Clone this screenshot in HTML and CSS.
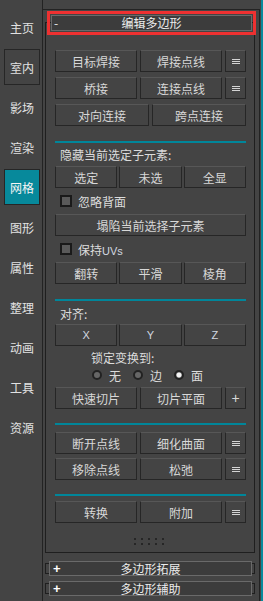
FILE: index.html
```html
<!DOCTYPE html>
<html lang="zh">
<head>
    <meta charset="UTF-8">
    <meta name="viewport" content="width=device-width, initial-scale=1.0">
    <title>编辑多边形</title>
    <link rel="stylesheet" href="styles.css">
</head>
<body>
    <div class="sidebar">
        <div class="nav-item">主页</div>
        <div class="nav-item hover">室内</div>
        <div class="nav-item">影场</div>
        <div class="nav-item">渲染</div>
        <div class="nav-item active">网格</div>
        <div class="nav-item">图形</div>
        <div class="nav-item">属性</div>
        <div class="nav-item">整理</div>
        <div class="nav-item">动画</div>
        <div class="nav-item">工具</div>
        <div class="nav-item">资源</div>
    </div>

    <div class="panel">
        <div class="rollout">
            <div class="rollout-head marked"><span class="toggle">-</span><span>编辑多边形</span><span></span></div>
            <div class="rollout-body">
                <div class="group first">
                    <div class="row with-icon">
                        <button class="btn">目标焊接</button>
                        <button class="btn">焊接点线</button>
                        <button class="btn"><svg width="8" height="5" viewBox="0 0 8 5"><rect y="0" width="8" height="1" fill="#d4d4d4"/><rect y="2" width="8" height="1" fill="#d4d4d4"/><rect y="4" width="8" height="1" fill="#d4d4d4"/></svg></button>
                    </div>
                    <div class="row with-icon">
                        <button class="btn">桥接</button>
                        <button class="btn">连接点线</button>
                        <button class="btn"><svg width="8" height="5" viewBox="0 0 8 5"><rect y="0" width="8" height="1" fill="#d4d4d4"/><rect y="2" width="8" height="1" fill="#d4d4d4"/><rect y="4" width="8" height="1" fill="#d4d4d4"/></svg></button>
                    </div>
                    <div class="row">
                        <button class="btn">对向连接</button>
                        <button class="btn">跨点连接</button>
                    </div>
                </div>

                <div class="group hide-group">
                    <div class="label">隐藏当前选定子元素:</div>
                    <div class="row three">
                        <button class="btn">选定</button>
                        <button class="btn">未选</button>
                        <button class="btn">全显</button>
                    </div>
                    <div class="check-row"><span class="check"></span><span>忽略背面</span></div>
                    <button class="btn">塌陷当前选择子元素</button>
                    <div class="check-row"><span class="check"></span><span>保持<span class="latin">UVs</span></span></div>
                    <div class="row three">
                        <button class="btn">翻转</button>
                        <button class="btn">平滑</button>
                        <button class="btn">棱角</button>
                    </div>
                </div>

                <div class="group align-group">
                    <div class="label tall">对齐:</div>
                    <div class="row three">
                        <button class="btn latin">X</button>
                        <button class="btn latin">Y</button>
                        <button class="btn latin">Z</button>
                    </div>
                    <div class="label lock">锁定变换到:</div>
                    <div class="radio-row">
                        <span class="radio-opt"><span class="radio"></span>无</span>
                        <span class="radio-opt"><span class="radio"></span>边</span>
                        <span class="radio-opt"><span class="radio on"></span>面</span>
                    </div>
                    <div class="row with-icon">
                        <button class="btn">快速切片</button>
                        <button class="btn">切片平面</button>
                        <button class="btn plus">+</button>
                    </div>
                </div>

                <div class="group edit-group">
                    <div class="row with-icon">
                        <button class="btn">断开点线</button>
                        <button class="btn">细化曲面</button>
                        <button class="btn"><svg width="8" height="5" viewBox="0 0 8 5"><rect y="0" width="8" height="1" fill="#d4d4d4"/><rect y="2" width="8" height="1" fill="#d4d4d4"/><rect y="4" width="8" height="1" fill="#d4d4d4"/></svg></button>
                    </div>
                    <div class="row with-icon">
                        <button class="btn">移除点线</button>
                        <button class="btn">松弛</button>
                        <button class="btn"><svg width="8" height="5" viewBox="0 0 8 5"><rect y="0" width="8" height="1" fill="#d4d4d4"/><rect y="2" width="8" height="1" fill="#d4d4d4"/><rect y="4" width="8" height="1" fill="#d4d4d4"/></svg></button>
                    </div>
                </div>

                <div class="group last">
                    <div class="row with-icon">
                        <button class="btn">转换</button>
                        <button class="btn">附加</button>
                        <button class="btn"><svg width="8" height="5" viewBox="0 0 8 5"><rect y="0" width="8" height="1" fill="#d4d4d4"/><rect y="2" width="8" height="1" fill="#d4d4d4"/><rect y="4" width="8" height="1" fill="#d4d4d4"/></svg></button>
                    </div>
                    <div class="grip"></div>
                </div>
            </div>
        </div>

        <div class="rollout closed">
            <div class="rollout-head"><span class="toggle">+</span><span>多边形拓展</span><span></span></div>
        </div>
        <div class="rollout closed second">
            <div class="rollout-head"><span class="toggle">+</span><span>多边形辅助</span><span></span></div>
        </div>
    </div>

    <div class="scrollbar"></div>
</body>
</html>
```

FILE: styles.css
```css
* {
    box-sizing: border-box;
}
html, body {
    margin: 0;
}
body {
    display: flex;
    height: 601px;
    overflow: hidden;
    background-color: #444444;
    color: #dcdcdc;
    font-family: "Noto Sans CJK SC", "Liberation Sans", sans-serif;
    font-size: 12px;
}

/* left tab bar */
.sidebar {
    width: 43px;
    flex-shrink: 0;
    border-right: 1px solid #232323;
    display: flex;
    flex-direction: column;
    gap: 4px;
    padding: 9px 0 0 4px;
}
.nav-item {
    width: 36px;
    height: 36px;
    display: flex;
    align-items: center;
    justify-content: center;
    border: 1px solid transparent;
    color: #e2e2e2;
}
.nav-item.hover {
    border-color: #262626;
}
.nav-item.active {
    background-color: #07899b;
    border-color: #262626;
    color: #f4f4f4;
}

/* command panel */
.panel {
    width: 217px;
    flex-shrink: 0;
    margin-top: 9px;
    border-top: 1px solid #232323;
    border-right: 1px solid #232323;
    padding: 0 4px 0 2px;
}
.scrollbar {
    width: 2px;
    margin-left: 1px;
    background-color: #07899b;
}

.rollout {
    border: 1px solid #1f1f1f;
    margin-top: 12px;
}
.rollout-head {
    height: 16px;
    margin: -8px 2px 0 5px;
    border: 1px solid #6a6a6a;
    background-color: #3c3c3c;
    display: grid;
    grid-template-columns: 14px 1fr 14px;
    align-items: center;
    line-height: 14px;
    text-align: center;
    color: #ececec;
}
.rollout-head .toggle {
    text-align: left;
    padding-left: 2px;
}
.rollout-head.marked {
    outline: 3px solid #ee3131;
    outline-offset: 1px;
}
.rollout.closed {
    height: 11px;
    margin-top: 10px;
}
.rollout.closed.second {
    margin-top: 9px;
}
.rollout.closed .rollout-head {
    height: 15px;
    margin: -3px 2px -3px 3px;
    line-height: 13px;
}
.rollout.closed .toggle {
    font-family: "Liberation Sans", sans-serif;
    font-weight: bold;
    font-size: 13px;
    color: #ffffff;
    padding-left: 3px;
}

.rollout-body {
    padding: 0 8px 7px 9px;
}
.group {
    display: flex;
    flex-direction: column;
    gap: 4px;
    border-top: 2px solid #00869a;
}
.group.first {
    border-top: none;
    gap: 5px;
    padding: 19px 0 15px;
}
.hide-group {
    padding: 4px 0 15px;
}
.align-group {
    padding: 5px 0 14px;
}
.edit-group {
    padding: 7px 0 14px;
}
.group.last {
    padding-top: 5px;
}

.label {
    line-height: 15px;
    padding-left: 5px;
}
.label.tall {
    line-height: 16px;
    margin-bottom: -2px;
}
.label.lock {
    line-height: 16px;
    padding-left: 36px;
}

.row {
    display: grid;
    grid-template-columns: 1fr 1fr;
    gap: 3px;
}
.row.with-icon {
    grid-template-columns: 1fr 1fr 21px;
}
.row.three {
    grid-template-columns: 1fr 1fr 1fr;
    gap: 2px;
}

.btn {
    height: 22px;
    margin: 0;
    padding: 0;
    display: flex;
    align-items: center;
    justify-content: center;
    background-color: #444444;
    border: 1px solid #262626;
    border-top-color: #575757;
    color: #d8d8d8;
    font: inherit;
}
.btn.plus {
    font-family: "Liberation Sans", sans-serif;
    font-size: 14px;
}
.latin {
    font-family: "Liberation Sans", sans-serif;
    font-size: 11px;
    color: #d2d8e0;
}

.check-row {
    height: 18px;
    display: flex;
    align-items: center;
    gap: 6px;
    padding-left: 5px;
}
.check {
    width: 12px;
    height: 12px;
    border: 2px solid #1a1a1a;
    background-color: #5a5a5a;
}

.radio-row {
    height: 16px;
    margin-top: -3px;
    display: flex;
    align-items: center;
    gap: 12px;
    padding-left: 37px;
}
.radio-opt {
    display: flex;
    align-items: center;
    gap: 7px;
}
.radio {
    width: 10px;
    height: 10px;
    border-radius: 50%;
    border: 2px solid #222222;
    background-color: #666666;
}
.radio.on {
    background: radial-gradient(circle, #f4f4f4 0 2px, #777777 3px);
}

.grip {
    width: 33px;
    height: 7px;
    margin: 11px auto 0;
    background-image:
        linear-gradient(to bottom, transparent 2px, #444444 2px),
        linear-gradient(to right, #262626 2px, transparent 2px);
    background-size: 7px 5px;
}
```
